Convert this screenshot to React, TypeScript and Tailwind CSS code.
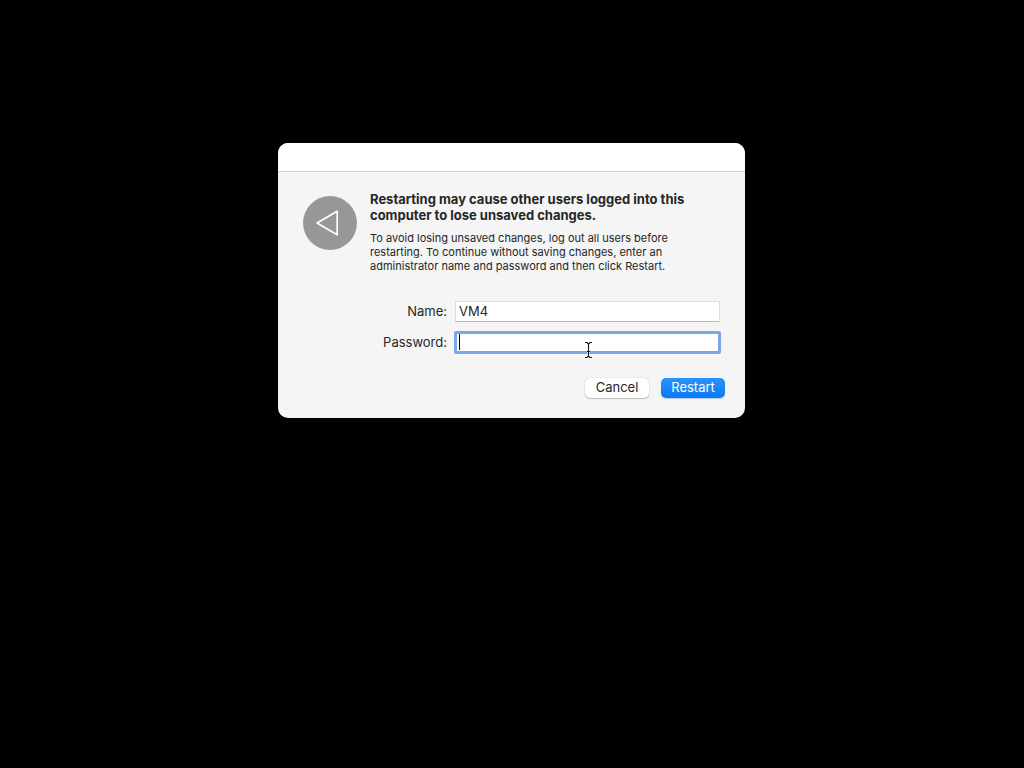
import React from "react";

function AppIcon() {
  return (
    <svg viewBox="0 0 54 54" className="mt-[5px] size-[54px] shrink-0" aria-hidden="true">
      <circle cx="27" cy="27" r="27" fill="#969797" />
      <path d="M14 27 L34.2 15.2 V38.8 Z" fill="none" stroke="#fff" strokeWidth="1.7" strokeLinejoin="round" />
    </svg>
  );
}

function TextCursor() {
  return (
    <svg
      viewBox="0 0 9 18"
      className="pointer-events-none absolute top-[9px] left-[129px] h-[18px] w-[9px]"
      fill="none"
      aria-hidden="true"
    >
      <path
        d="M1 1.5 H3 L4.5 3 L6 1.5 H8 M4.5 3 V15 M1 16.5 H3 L4.5 15 L6 16.5 H8 M3 10.5 H6"
        stroke="#fff"
        strokeWidth="2.4"
        opacity="0.6"
      />
      <path
        d="M1 1.5 H3 L4.5 3 L6 1.5 H8 M4.5 3 V15 M1 16.5 H3 L4.5 15 L6 16.5 H8 M3 10.5 H6"
        stroke="#111"
        strokeWidth="1.1"
      />
    </svg>
  );
}

export default function App() {
  return (
    <main className="min-h-screen bg-black pt-[143px] pr-[17px] pb-8 pl-4 font-['Inter','Liberation_Sans',sans-serif] text-[#262626]">
      <form
        role="dialog"
        aria-labelledby="title"
        onSubmit={(e) => e.preventDefault()}
        className="mx-auto w-full max-w-[467px] overflow-hidden rounded-[10px] bg-[#f5f5f5]"
      >
        <div className="h-[29px] border-b border-[#cfcfcf] bg-white" />
        <div className="px-5 pt-[19px] pb-5">
          <div className="flex gap-[13px] pl-[5px]">
            <AppIcon />
            <div>
              <h1 id="title" className="text-[13px] leading-4 font-bold whitespace-nowrap">
                Restarting may cause other users logged into this
                <br />
                computer to lose unsaved changes.
              </h1>
              <p className="mt-2 text-[11px] leading-[14px] whitespace-nowrap">
                To avoid losing unsaved changes, log out all users before
                <br />
                restarting. To continue without saving changes, enter an
                <br />
                administrator name and password and then click Restart.
              </p>
            </div>
          </div>
          <div className="mt-7 grid grid-cols-[149px_1fr] items-center gap-x-2 gap-y-[10px] pr-[5px] text-[13px] leading-4">
            <label htmlFor="name" className="pb-0.5 text-right">
              Name:
            </label>
            <input
              id="name"
              type="text"
              defaultValue="VM4"
              className="h-[21px] w-full border border-[#dedede] border-b-[#b9b9b9] bg-white px-[3px] pb-0.5 outline-none"
            />
            <label htmlFor="password" className="pb-0.5 text-right">
              Password:
            </label>
            <div className="relative flex">
              <input
                id="password"
                type="password"
                className="h-[21px] w-full rounded-[1px] border-2 border-[#7ba7e6] bg-white px-0.5 ring-1 ring-[#7ba7e6] outline-none"
              />
              <span className="pointer-events-none absolute top-[2px] left-1 h-4 w-px bg-black" />
              <TextCursor />
            </div>
          </div>
          <div className="mt-[25px] flex justify-end gap-3 text-[13px] leading-[18px]">
            <button
              type="button"
              className="h-5 w-16 rounded-[5px] bg-white pb-0.5 shadow-[0_0_1px_rgba(0,0,0,0.35),0_1px_1px_rgba(0,0,0,0.2)]"
            >
              Cancel
            </button>
            <button
              type="submit"
              className="h-5 w-16 rounded-[5px] bg-linear-to-b from-[#2b92fd] to-[#0a78f6] pb-0.5 text-white shadow-[0_1px_1px_rgba(0,80,200,0.25)]"
            >
              Restart
            </button>
          </div>
        </div>
      </form>
    </main>
  );
}
